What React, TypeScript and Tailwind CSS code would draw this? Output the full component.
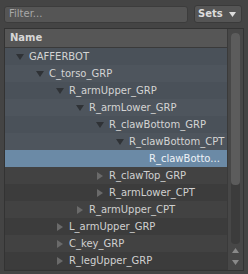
type Row = {
  name: string
  depth: number
  state: 'open' | 'closed' | 'leaf'
  selected?: boolean
  tinted?: boolean
}

const rows: Row[] = [
  { name: 'GAFFERBOT', depth: 0, state: 'open', tinted: true },
  { name: 'C_torso_GRP', depth: 1, state: 'open', tinted: true },
  { name: 'R_armUpper_GRP', depth: 2, state: 'open', tinted: true },
  { name: 'R_armLower_GRP', depth: 3, state: 'open', tinted: true },
  { name: 'R_clawBottom_GRP', depth: 4, state: 'open', tinted: true },
  { name: 'R_clawBottom_CPT', depth: 5, state: 'open', tinted: true },
  { name: 'R_clawBotto...', depth: 6, state: 'leaf', selected: true },
  { name: 'R_clawTop_GRP', depth: 4, state: 'closed' },
  { name: 'R_armLower_CPT', depth: 4, state: 'closed' },
  { name: 'R_armUpper_CPT', depth: 3, state: 'closed' },
  { name: 'L_armUpper_GRP', depth: 2, state: 'closed' },
  { name: 'C_key_GRP', depth: 2, state: 'closed' },
  { name: 'R_legUpper_GRP', depth: 2, state: 'closed' },
]

function rowBg(row: Row, i: number) {
  if (row.selected) return 'bg-[#6b8aa6] text-[#eef2f6]'
  if (row.tinted) return i % 2 ? 'bg-[#4e555d] text-[#d4d4d4]' : 'bg-[#4a5159] text-[#d4d4d4]'
  return i % 2 ? 'bg-[#424242] text-[#d0d0d0]' : 'bg-[#3c3c3c] text-[#d0d0d0]'
}

function Arrow({ state }: { state: Row['state'] }) {
  if (state === 'open')
    return (
      <svg width="8" height="6" viewBox="0 0 8 6">
        <path d="M0 0 H8 L4 6 Z" fill="#2f3236" />
      </svg>
    )
  if (state === 'closed')
    return (
      <svg width="6" height="8" viewBox="0 0 6 8">
        <path d="M0 0 L6 4 L0 8 Z" fill="#6a6a6a" />
      </svg>
    )
  return null
}

export default function App() {
  return (
    <div
      className="w-[248px] h-[274px] bg-[#444444] flex flex-col text-[10px] leading-none overflow-hidden"
      style={{ fontFamily: '"DejaVu Sans", sans-serif' }}
    >
      <div className="flex items-center gap-[6px] px-[4px] pt-[5px]">
        <div className="w-[184px] h-[17px] rounded-[3px] bg-[#555555] border border-[#3c3c3c] flex items-center pl-[4px] text-[#a8a8a8]">
          Filter...
        </div>
        <div className="w-[48px] h-[18px] rounded-[3px] bg-[#555555] border border-[#3a3a3a] flex items-center justify-between pl-[3px] pr-[5px] text-[#dcdcdc] font-bold">
          <span>Sets</span>
          <svg width="7" height="5" viewBox="0 0 7 5">
            <path d="M0 0 H7 L3.5 5 Z" fill="#dcdcdc" />
          </svg>
        </div>
      </div>

      <div className="mx-[4px] mt-[5px] mb-[3px] flex-1 min-h-0 flex border border-[#333333] bg-[#3a3a3a]">
        <div className="flex-1 min-w-0 flex flex-col">
          <div className="h-[19px] shrink-0 bg-[#565656] border-b border-[#3a3a3a] flex items-center pl-[5px] font-bold text-[#d6d6d6]">
            Name
          </div>
          {rows.map((row, i) => (
            <div
              key={row.name}
              className={`h-[17px] shrink-0 flex items-center whitespace-nowrap ${rowBg(row, i)}`}
              style={{ paddingLeft: 6 + row.depth * 20 }}
            >
              <span className="w-[17px] shrink-0 flex items-center justify-center">
                <Arrow state={row.state} />
              </span>
              <span className="pl-[1px]">{row.name}</span>
            </div>
          ))}
        </div>

        <div className="w-[16px] shrink-0 bg-[#474747] border-l border-[#3a3a3a] flex flex-col items-center pt-[4px] pb-[4px]">
          <div className="w-[9px] flex-1 flex flex-col bg-[#3c3c3c] rounded-[4px]">
            <div className="h-[152px] bg-[#5c5c5c] rounded-[4px]" />
          </div>
          <div className="h-[22px] flex flex-col items-center justify-center gap-[7px] pt-[2px]">
            <svg width="7" height="5" viewBox="0 0 7 5">
              <path d="M3.5 0 L7 5 H0 Z" fill="#8a8a8a" />
            </svg>
            <svg width="7" height="5" viewBox="0 0 7 5">
              <path d="M0 0 H7 L3.5 5 Z" fill="#8a8a8a" />
            </svg>
          </div>
        </div>
      </div>
    </div>
  )
}
